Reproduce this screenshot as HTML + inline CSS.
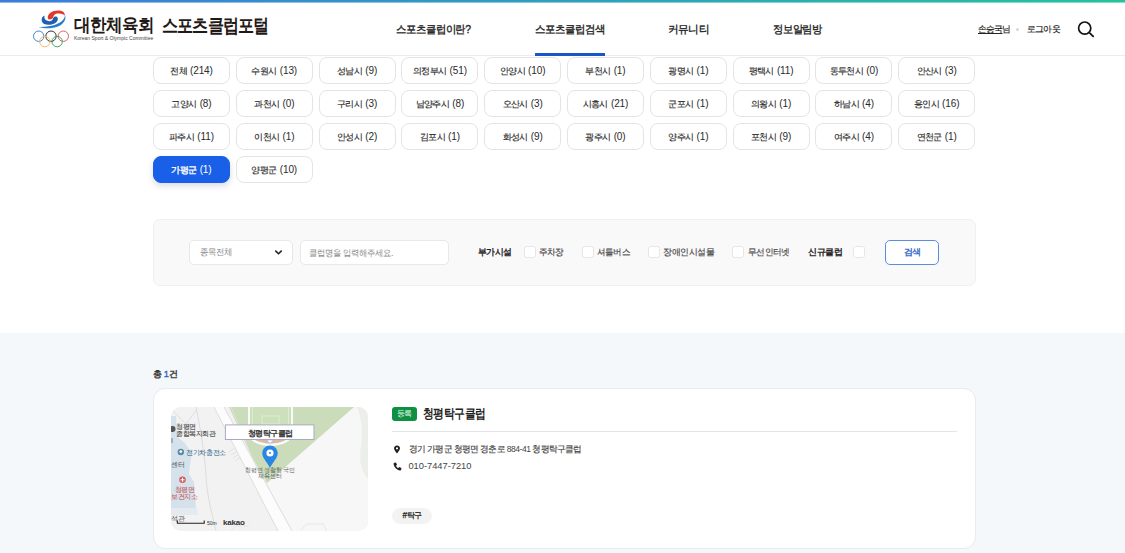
<!DOCTYPE html>
<html><head><meta charset="utf-8">
<style>
*{box-sizing:border-box;margin:0;padding:0}
html,body{width:1125px;height:553px;overflow:hidden;background:#fff;font-family:"Liberation Sans",sans-serif;color:#222}
.abs{position:absolute}
.th{-webkit-text-stroke:0.18px currentColor}
#topbar{position:absolute;left:0;top:0;width:1125px;height:2px;background:linear-gradient(90deg,#3c7cdc 0%,#24c39c 100%)}
#topbar2{position:absolute;left:0;top:2px;width:1125px;height:1px;opacity:.55;background:linear-gradient(90deg,#3c7cdc 0%,#24c39c 100%)}
#hdr{position:absolute;left:0;top:3px;width:1125px;height:53px;border-bottom:1px solid #ececec;background:#fff}
.nav{position:absolute;top:20px;font-size:12px;font-weight:normal;-webkit-text-stroke:0.35px currentColor;color:#222;white-space:nowrap;line-height:14px}
.chip{-webkit-text-stroke:0.15px currentColor;position:absolute;width:77px;height:27px;border:1px solid #e4e4e6;border-radius:8px;background:#fff;font-size:10px;color:#2a2a2a;text-align:center;line-height:25px;white-space:nowrap}
.chip span{display:inline-block;letter-spacing:-0.6px;font-size:9.4px}
.chip i{font-style:normal;font-size:10px;letter-spacing:-0.1px;-webkit-text-stroke:0;margin-left:1px}
.chip.on{background:#1a5fe7;border-color:#1a5fe7;color:#fff;box-shadow:0 3px 6px rgba(20,40,90,.16);-webkit-text-stroke:0.35px currentColor}
#filter{position:absolute;left:153px;top:219px;width:823px;height:67px;background:#f9f9fa;border:1px solid #f0f0f3;border-radius:7px}
.cb{position:absolute;top:246px;width:12px;height:12px;border:1px solid #e6e6e9;border-radius:2.5px;background:#fff}
.lbl{position:absolute;top:246px;font-size:10px;color:#4a4a4a;white-space:nowrap;line-height:12px}
#sect{position:absolute;left:0;top:333px;width:1125px;height:220px;background:#f4f8fb}
#card{position:absolute;left:153px;top:388px;width:823px;height:161px;background:#fff;border:1px solid #e7eaee;border-radius:12px}
</style></head><body>
<div id="topbar"></div><div id="topbar2"></div>
<div id="hdr"></div>
<!-- logo -->
<svg class="abs" style="left:30px;top:6px" width="42" height="44" viewBox="0 0 42 44">
  <path d="M8.5 21 C17 21 27 19.5 32 15 C34 13 35 11 35 9 C36.5 13 34 18 28 20.5 C22 23 14 22.5 8.5 21 Z" fill="#2a7cc9"/>
  <path d="M27.8 12.3 C28.3 16.5 23.5 19 18 18.8 C13.5 18.6 11 16.2 11.8 12.5 C12.3 10.8 13.6 10 14.8 9.6 C13.8 11.5 14.5 14.8 19 15.2 C21.5 15.4 22.8 14 23.2 12 C23.7 10 27.4 9.8 27.8 12.3 Z" fill="#1d5fb3"/>
  <path d="M17.8 12.2 C17.3 8 22 4.6 28 4.6 C32.2 4.6 35.3 6.5 34.7 9.8 C33.2 7.6 30 7 27 7.6 C24.6 8.1 23.6 9.6 23.1 11.6 C22.5 13.6 18.4 14.2 17.8 12.2 Z" fill="#e0392c"/>
  <g fill="none" stroke-width="0.95">
    <circle cx="8.7" cy="30.2" r="5.2" stroke="#3d7fc2"/>
    <circle cx="21" cy="30.2" r="5.2" stroke="#2b2b2b"/>
    <circle cx="33.3" cy="30.2" r="5.2" stroke="#d85a63"/>
    <circle cx="14.85" cy="35.6" r="5.2" stroke="#ecb86a"/>
    <circle cx="27.15" cy="35.6" r="5.2" stroke="#3c9f5c"/>
  </g>
</svg>
<div id="daehan" class="abs" style="left:74.0px;top:14px;font-size:18px;font-weight:bold;color:#231815;letter-spacing:-0.5px;line-height:22px;white-space:nowrap;transform:scaleX(0.917);transform-origin:0 0">대한체육회</div>
<div class="abs" style="left:74px;top:35px;font-size:5px;color:#444;line-height:6px;white-space:nowrap;transform:scaleX(1.0);transform-origin:0 0">Korean Sport &amp; Olympic Committee</div>
<div id="portal" class="abs" style="left:162.0px;top:15px;font-size:18.5px;font-weight:bold;color:#231815;letter-spacing:-1px;line-height:22px;white-space:nowrap;transform:scaleX(0.844);transform-origin:0 0">스포츠클럽포털</div>

<div id="user" class="abs th" style="left:977.8px;top:23px;font-size:9.1px;color:#222;line-height:12px;white-space:nowrap;letter-spacing:-0.6px;transform:scaleX(0.97);transform-origin:0 0"><span style="text-decoration:underline">손승국</span>님</div>
<div class="abs" style="left:1016px;top:28px;width:3px;height:3px;border-radius:50%;background:#d6d6d6"></div>
<div id="logout" class="abs th" style="left:1026.8px;top:23px;font-size:9.1px;color:#222;line-height:12px;white-space:nowrap;letter-spacing:-0.6px;transform:scaleX(0.975);transform-origin:0 0">로그아웃</div>
<svg class="abs" style="left:1076px;top:19px" width="20" height="20" viewBox="0 0 20 20">
  <circle cx="8.7" cy="9.1" r="6.1" fill="none" stroke="#111" stroke-width="1.7"/>
  <path d="M13.8 14.1 L17.2 17.4" stroke="#111" stroke-width="1.8" stroke-linecap="round"/>
</svg>


<div id="nav1" class="nav" style="left:395.6px;top:22px;font-size:11px;letter-spacing:-0.5px;transform:scaleX(0.943);transform-origin:0 0">스포츠클럽이란?</div>
<div id="nav2" class="nav" style="left:535.4px;top:22px;font-size:11px;letter-spacing:-0.5px;transform:scaleX(0.949);transform-origin:0 0">스포츠클럽검색</div>
<div id="nav3" class="nav" style="left:668.0px;top:22px;font-size:11px;letter-spacing:-0.5px;transform:scaleX(0.971);transform-origin:0 0">커뮤니티</div>
<div id="nav4" class="nav" style="left:773.0px;top:22px;font-size:11px;letter-spacing:-0.5px;transform:scaleX(0.936);transform-origin:0 0">정보알림방</div>
<div class="abs" style="left:535px;top:53px;width:70px;height:3px;background:#1b56c9"></div>

<div id="chips">
<div class="chip" style="left:153.0px;top:57px"><span>전체 <i>(214)</i></span></div>
<div class="chip" style="left:235.8px;top:57px"><span>수원시 <i>(13)</i></span></div>
<div class="chip" style="left:318.6px;top:57px"><span>성남시 <i>(9)</i></span></div>
<div class="chip" style="left:401.4px;top:57px"><span>의정부시 <i>(51)</i></span></div>
<div class="chip" style="left:484.2px;top:57px"><span>안양시 <i>(10)</i></span></div>
<div class="chip" style="left:567.0px;top:57px"><span>부천시 <i>(1)</i></span></div>
<div class="chip" style="left:649.8px;top:57px"><span>광명시 <i>(1)</i></span></div>
<div class="chip" style="left:732.6px;top:57px"><span>평택시 <i>(11)</i></span></div>
<div class="chip" style="left:815.4px;top:57px"><span>동두천시 <i>(0)</i></span></div>
<div class="chip" style="left:898.2px;top:57px"><span>안산시 <i>(3)</i></span></div>
<div class="chip" style="left:153.0px;top:90px"><span>고양시 <i>(8)</i></span></div>
<div class="chip" style="left:235.8px;top:90px"><span>과천시 <i>(0)</i></span></div>
<div class="chip" style="left:318.6px;top:90px"><span>구리시 <i>(3)</i></span></div>
<div class="chip" style="left:401.4px;top:90px"><span>남양주시 <i>(8)</i></span></div>
<div class="chip" style="left:484.2px;top:90px"><span>오산시 <i>(3)</i></span></div>
<div class="chip" style="left:567.0px;top:90px"><span>시흥시 <i>(21)</i></span></div>
<div class="chip" style="left:649.8px;top:90px"><span>군포시 <i>(1)</i></span></div>
<div class="chip" style="left:732.6px;top:90px"><span>의왕시 <i>(1)</i></span></div>
<div class="chip" style="left:815.4px;top:90px"><span>하남시 <i>(4)</i></span></div>
<div class="chip" style="left:898.2px;top:90px"><span>용인시 <i>(16)</i></span></div>
<div class="chip" style="left:153.0px;top:123px"><span>파주시 <i>(11)</i></span></div>
<div class="chip" style="left:235.8px;top:123px"><span>이천시 <i>(1)</i></span></div>
<div class="chip" style="left:318.6px;top:123px"><span>안성시 <i>(2)</i></span></div>
<div class="chip" style="left:401.4px;top:123px"><span>김포시 <i>(1)</i></span></div>
<div class="chip" style="left:484.2px;top:123px"><span>화성시 <i>(9)</i></span></div>
<div class="chip" style="left:567.0px;top:123px"><span>광주시 <i>(0)</i></span></div>
<div class="chip" style="left:649.8px;top:123px"><span>양주시 <i>(1)</i></span></div>
<div class="chip" style="left:732.6px;top:123px"><span>포천시 <i>(9)</i></span></div>
<div class="chip" style="left:815.4px;top:123px"><span>여주시 <i>(4)</i></span></div>
<div class="chip" style="left:898.2px;top:123px"><span>연천군 <i>(1)</i></span></div>
<div class="chip on" style="left:153.0px;top:156px"><span>가평군 <i>(1)</i></span></div>
<div class="chip" style="left:235.8px;top:156px"><span>양평군 <i>(10)</i></span></div>
</div>

<div id="filter"></div>
<div class="abs" style="left:189px;top:240px;width:104px;height:25px;background:#fff;border:1px solid #e8e8ec;border-radius:5px"></div>
<div id="sel" class="abs" style="left:199.6px;top:246px;font-size:9.3px;color:#888;line-height:12px;white-space:nowrap;letter-spacing:-0.37px;transform:scaleX(0.932);transform-origin:0 0">종목전체</div>
<svg class="abs" style="left:274px;top:249px" width="9" height="7" viewBox="0 0 9 7"><path d="M1.3 1.6 L4.5 4.8 L7.7 1.6" fill="none" stroke="#222" stroke-width="1.5"/></svg>
<div class="abs" style="left:300px;top:240px;width:149px;height:25px;background:#fff;border:1px solid #e8e8ec;border-radius:5px"></div>
<div id="inp" class="abs" style="left:308.8px;top:247px;font-size:9.3px;color:#888;line-height:12px;white-space:nowrap;letter-spacing:-0.37px;transform:scaleX(0.927);transform-origin:0 0">클럽명을 입력해주세요.</div>
<div id="bugasi" class="abs" style="left:477.5px;top:246px;font-size:9.3px;font-weight:normal;-webkit-text-stroke:0.38px currentColor;color:#222;line-height:12px;white-space:nowrap;letter-spacing:-0.37px;transform:scaleX(0.981);transform-origin:0 0">부가시설</div>
<div class="cb" style="left:524px"></div><div id="juchajang" class="lbl th" style="left:539.0px;top:246px;font-size:9.3px;letter-spacing:-0.37px;transform:scaleX(0.954);transform-origin:0 0">주차장</div>
<div class="cb" style="left:582px"></div><div id="shuttle" class="lbl th" style="left:597.4px;top:246px;font-size:9.3px;letter-spacing:-0.37px;transform:scaleX(0.951);transform-origin:0 0">셔틀버스</div>
<div class="cb" style="left:648px"></div><div id="jangae" class="lbl th" style="left:663.0px;top:246px;font-size:9.3px;letter-spacing:-0.37px;transform:scaleX(0.988);transform-origin:0 0">장애인시설물</div>
<div class="cb" style="left:732px"></div><div id="wifi" class="lbl th" style="left:748.0px;top:246px;font-size:9.3px;letter-spacing:-0.37px;transform:scaleX(0.963);transform-origin:0 0">무선인터넷</div>
<div id="newclub" class="abs" style="left:808.0px;top:246px;font-size:9.3px;font-weight:normal;-webkit-text-stroke:0.38px currentColor;color:#222;line-height:12px;white-space:nowrap;letter-spacing:-0.37px;transform:scaleX(0.994);transform-origin:0 0">신규클럽</div>
<div class="cb" style="left:853px"></div>
<div class="abs" style="left:885px;top:240px;width:54px;height:25px;background:#fff;border:1px solid #5a8de0;border-radius:5px;color:#3a6cc9;font-size:9.3px;font-weight:bold;text-align:center;line-height:23px;letter-spacing:-0.6px;padding-left:1px">검색</div>

<div id="sect"></div>
<div id="card"></div>
<div id="total" class="abs" style="left:153.0px;top:368px;font-size:9.3px;font-weight:normal;-webkit-text-stroke:0.35px currentColor;color:#333;line-height:12px;white-space:nowrap;letter-spacing:-0.37px;transform:scaleX(1.0);transform-origin:0 0">총 <span style="color:#2f63c4">1</span>건</div>
<div id="map" class="abs" style="left:171px;top:407px;width:197px;height:124px;border-radius:10px;overflow:hidden;background:#f1f1f1">
<svg width="197" height="124" viewBox="0 0 197 124" style="display:block;font-family:'Liberation Sans',sans-serif">
  <rect width="197" height="124" fill="#f2f2f2"/>
  <!-- right lighter region -->
  <path d="M183 0 L197 0 L197 124 L121 124 L96 76Z" fill="#f7f7f7"/>
  <path d="M186 0 C191 12 192 25 190 40 C188 52 189 62 197 72 L197 0Z" fill="#ecefe9"/>
  <!-- blue area left -->
  <path d="M0 9 L5 9 L6 30 L13 35 L21 46 L19 58 L18 67 L23 75 L25 101 L0 101Z" fill="#d5e1eb"/>
  <path d="M0 101 L26 101 L27 108 L8 108 L0 112Z" fill="#e4eaf0"/>
  <!-- left V road -->
  <path d="M1 3 L15 17 L26 2" fill="none" stroke="#dedede" stroke-width="1"/>
  <path d="M25 0 C30 25 34 50 35 70 C36 90 42 110 45 124" fill="none" stroke="#dcdcdc" stroke-width="1"/>
  <!-- green triangle -->
  <path d="M58 0 L183 0 L96 76 L80 48 Z" fill="#cadcb9"/>
  <!-- stadium -->
  <path d="M77 0 L122 0 L122 26 C122 34 111 39 99.5 39 C88 39 77 34 77 26Z" fill="#fafafa"/>
  <path d="M79 20 L120 20 L120 26 C120 32 110.5 36.5 99.5 36.5 C88.5 36.5 79 32 79 26Z" fill="#d8baa8"/>
  <rect x="79" y="0" width="41" height="27" fill="#cde0bc"/>
  <rect x="81.5" y="-1" width="36" height="26" fill="none" stroke="#e6efdd" stroke-width="0.7"/>
  <rect x="91" y="9" width="17" height="8" fill="none" stroke="#e6efdd" stroke-width="0.7"/>
  <!-- main road -->
  <path d="M43 0 L53 0 L121 124 L107 124Z" fill="#fcfcfc"/>
  <path d="M43 0 L107 124" stroke="#dadada" stroke-width="0.9"/>
  <path d="M53 0 L121 124" stroke="#dadada" stroke-width="0.9"/>
  <path d="M60 0 L80 48" stroke="#e6e6e6" stroke-width="0.8"/>
  <!-- crosswalk -->
  <path d="M64 41 L58 45 M66 44 L60 48 M68 47 L62 51 M70 50 L64 54" stroke="#e3e3e3" stroke-width="1"/>
  <!-- bottom faint buildings -->
  <path d="M130 124 L135 117 L152 117 L156 124" fill="none" stroke="#e3e3e3" stroke-width="0.8"/>
  <path d="M60 124 L64 119 L78 119" fill="none" stroke="#e3e3e3" stroke-width="0.8"/>
  <!-- POI labels -->
  <circle cx="1.5" cy="22" r="3" fill="#555"/>
  <text x="5" y="21.5" font-size="6.5" fill="#3a3a3a" stroke="#3a3a3a" stroke-width="0.08" letter-spacing="-0.45">청평면</text>
  <text x="5" y="28.8" font-size="6.5" fill="#3a3a3a" stroke="#3a3a3a" stroke-width="0.08" letter-spacing="-0.45">종합복지회관</text>
  <circle cx="9.8" cy="45" r="3.2" fill="#5b8aa3"/><circle cx="9.8" cy="44.6" r="1.3" fill="#fff"/>
  <text x="15" y="47.5" font-size="6.5" fill="#3f7390" stroke="#3f7390" stroke-width="0.08" letter-spacing="-0.35">전기차충전소</text>
  <text x="0" y="60.3" font-size="6.8" fill="#4a4a4a" letter-spacing="-0.3">센터</text>
  <text x="0" y="36" font-size="6.8" fill="#4a4a4a">I</text>
  <circle cx="11.5" cy="72.8" r="3.3" fill="#d95c5c"/>
  <path d="M11.5 70.8 V74.8 M9.5 72.8 H13.5" stroke="#fff" stroke-width="1"/>
  <text x="3.5" y="84.5" font-size="6.5" fill="#c85a5a" stroke="#c85a5a" stroke-width="0.08" letter-spacing="-0.35">청평면</text>
  <text x="0" y="92.3" font-size="6.5" fill="#c85a5a" stroke="#c85a5a" stroke-width="0.08" letter-spacing="-0.35">보건지소</text>
  <text x="0" y="113.8" font-size="6.8" fill="#4a4a4a" letter-spacing="-0.3">석관</text>
  <!-- label box -->
  <rect x="54.4" y="17.9" width="88.6" height="14.6" fill="#fff" stroke="#a9a9c6" stroke-width="1"/>
  <path d="M95.5 33 L99 36.5 L102.5 33Z" fill="#fff" stroke="#a9a9c6" stroke-width="0.6"/>
  <text x="99.3" y="29" font-size="8.2" fill="#333" stroke="#333" stroke-width="0.35" text-anchor="middle" letter-spacing="-0.5">청평탁구클럽</text>
  <!-- pin -->
  <path d="M99 61 C96 55 91.3 51 91.3 46.3 C91.3 42 94.8 38.6 99 38.6 C103.2 38.6 106.7 42 106.7 46.3 C106.7 51 102 55 99 61Z" fill="#2a86e4"/>
  <circle cx="99" cy="46" r="3.6" fill="#fff"/><circle cx="99" cy="46" r="1" fill="#2a86e4"/>
  <text x="99" y="64.5" font-size="5.6" fill="#555" text-anchor="middle" letter-spacing="-0.2">청평면 생활형 국민</text>
  <text x="99" y="70.8" font-size="5.6" fill="#555" text-anchor="middle" letter-spacing="-0.2">체육센터</text>
  <!-- scale bar -->
  <path d="M6.4 113.6 V116.2 H33.2 V113.6" fill="none" stroke="#222" stroke-width="1.1"/>
  <text x="36" y="118.2" font-size="5" fill="#333">50m</text>
  <text x="52" y="118.4" font-size="8" font-weight="bold" fill="#333" letter-spacing="-0.2">kakao</text>
</svg>
</div>
<div class="abs" style="left:392px;top:407px;width:25px;height:14px;background:#0f8f42;border-radius:3px;color:#e8fff0;font-size:7.6px;text-align:center;line-height:14px;letter-spacing:-0.3px">등록</div>
<div id="title" class="abs" style="left:422.8px;top:407px;font-size:12.6px;font-weight:bold;color:#222;line-height:15px;white-space:nowrap;letter-spacing:-0.5px;transform:scaleX(0.833);transform-origin:0 0">청평탁구클럽</div>
<div class="abs" style="left:392px;top:431px;width:565px;height:1px;background:#e2e4e8"></div>
<svg class="abs" style="left:393px;top:445px" width="8" height="9" viewBox="0 0 8 9"><path d="M4 0.5 C2 0.5 1 2 1 3.3 C1 5 4 8.5 4 8.5 C4 8.5 7 5 7 3.3 C7 2 6 0.5 4 0.5Z M4 2.2 A1.1 1.1 0 1 0 4.01 2.2Z" fill="#222" fill-rule="evenodd"/></svg>
<div id="addr" class="abs th" style="left:409.0px;top:443px;font-size:8.9px;color:#444;line-height:12px;white-space:nowrap;letter-spacing:-0.5px;transform:scaleX(0.964);transform-origin:0 0">경기 가평군 청평면 경춘로 <span style="-webkit-text-stroke:0">884-41</span> 청평탁구클럽</div>
<svg class="abs" style="left:393px;top:462px" width="9" height="9" viewBox="0 0 9 9"><path d="M1.5 0.8 L3 0.6 L4 2.8 L3 3.7 C3.6 5 4.2 5.6 5.4 6.1 L6.3 5.1 L8.4 6.1 L8.2 7.7 C8 8.3 7.5 8.5 7 8.4 C3.8 8 1 5.2 0.6 2 C0.5 1.4 0.9 0.9 1.5 0.8Z" fill="#222"/></svg>
<div id="phone" class="abs" style="left:408.4px;top:460px;font-size:9.3px;color:#444;line-height:12px;white-space:nowrap;letter-spacing:0px;transform:scaleX(1.0);transform-origin:0 0">010-7447-7210</div>
<div class="abs" style="left:392px;top:508px;width:40px;height:16px;background:#f3f3f4;border-radius:8px;color:#222;font-size:8.2px;text-align:center;line-height:16px;letter-spacing:-0.5px;-webkit-text-stroke:0.25px currentColor">#탁구</div>

</body></html>
